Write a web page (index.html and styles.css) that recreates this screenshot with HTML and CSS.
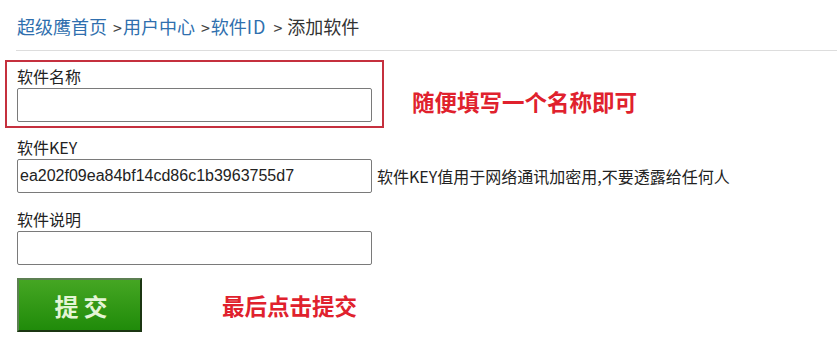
FILE: index.html
```html
<!DOCTYPE html>
<html lang="zh-CN">
<head>
<meta charset="utf-8">
<title>添加软件</title>
<link rel="stylesheet" href="styles.css">
</head>
<body>
<div class="crumb">
  <a class="crumb-link" href="#">超级鹰首页</a><span class="sep">&gt;</span><a class="crumb-link" href="#">用户中心</a><span class="sep">&gt;</span><a class="crumb-link" href="#">软件<span class="latin">ID</span></a><span class="sep sep-last">&gt;</span><span class="crumb-current">添加软件</span>
</div>
<form class="form">
  <div class="row">
    <div class="field field-highlight">
      <label class="label">软件名称</label>
      <input class="input" type="text">
    </div>
    <div class="note note-top">随便填写一个名称即可</div>
  </div>
  <div class="field field-plain">
    <label class="label">软件KEY</label>
    <div class="inline">
      <input class="input" type="text" value="ea202f09ea84bf14cd86c1b3963755d7">
      <span class="hint">软件KEY值用于网络通讯加密用,不要透露给任何人</span>
    </div>
  </div>
  <div class="field field-plain field-desc">
    <label class="label">软件说明</label>
    <input class="input" type="text">
  </div>
  <div class="row row-submit">
    <button class="submit" type="button">提交</button>
    <div class="note note-submit">最后点击提交</div>
  </div>
</form>
</body>
</html>
```
FILE: styles.css
```css
html, body {
  margin: 0;
  padding: 0;
  background: #ffffff;
}
body {
  font-family: "Noto Sans CJK SC", "Noto Sans", sans-serif;
  color: #333333;
}
.crumb {
  margin-left: 16px;
  padding: 15px 0 12px 1px;
  height: 23px;
  line-height: 23px;
  font-size: 18px;
  border-bottom: 1px solid #dddddd;
  white-space: nowrap;
}
.crumb-link {
  color: #2f6fae;
  text-decoration: none;
}
.latin {
  letter-spacing: 1px;
}
.sep {
  display: inline-block;
  color: #444444;
  font-size: 16px;
  margin: 0 1px 0 6px;
}
.sep-last {
  margin: 0 5px 0 7px;
}
.crumb-current {
  color: #333333;
}
.form {
  margin: 0;
  padding-top: 9px;
}
.row {
  display: flex;
  align-items: flex-start;
}
.field {
  display: flex;
  flex-direction: column;
  align-items: flex-start;
}
.field-highlight {
  margin-left: 5px;
  width: 355px;
  padding: 4px 10px;
  border: 2px solid #c5303e;
}
.field-plain {
  margin-left: 17px;
  margin-top: 9px;
}
.field-desc {
  margin-top: 16px;
}
.label {
  font-size: 16px;
  line-height: 20px;
  color: #222222;
  margin-bottom: 2px;
}
.input {
  box-sizing: border-box;
  width: 355px;
  height: 34px;
  margin: 0;
  padding: 0 2px;
  border: 1px solid #7a7a7a;
  border-radius: 2px;
  font-family: "Liberation Sans", Arial, sans-serif;
  font-size: 16px;
  color: #222222;
  background: #ffffff;
  outline: none;
}
.inline {
  display: flex;
  align-items: center;
}
.hint {
  margin-left: 5px;
  font-size: 16px;
  line-height: 20px;
  color: #222222;
  white-space: nowrap;
}
.note {
  color: #e0212d;
  font-weight: 700;
  font-size: 22.5px;
  line-height: 30px;
  white-space: nowrap;
}
.note-top {
  margin-left: 28px;
  margin-top: 26px;
}
.row-submit {
  margin-top: 13px;
  margin-left: 17px;
  align-items: center;
}
.submit {
  box-sizing: border-box;
  width: 125px;
  height: 54px;
  margin: 0;
  padding: 0 0 0 8px;
  border-style: solid;
  border-width: 2px;
  border-color: #5c7f52 #1b3512 #1b3512 #5c7f52;
  background: linear-gradient(#45a623, #208b0a);
  color: #e4f5d6;
  font-family: "Noto Sans CJK SC", sans-serif;
  font-size: 24px;
  font-weight: 700;
  letter-spacing: 5px;
  cursor: pointer;
}
.note-submit {
  margin-left: 80px;
}
```
